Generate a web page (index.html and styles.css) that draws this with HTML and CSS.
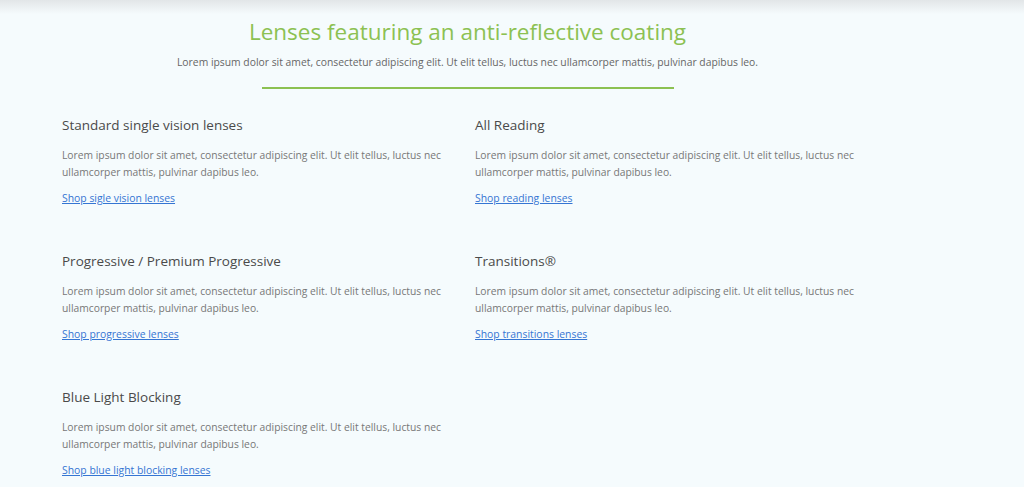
FILE: index.html
```html
<!DOCTYPE html>
<html lang="en">
<head>
  <meta charset="UTF-8">
  <meta name="viewport" content="width=device-width, initial-scale=1.0">
  <title>Anti-reflective lenses</title>
  <link rel="stylesheet" href="styles.css">
</head>
<body>

<div class="top-shadow"></div>

<div class="container">
  <section class="intro">
    <h1>Lenses featuring an anti-reflective coating</h1>
    <p class="lead">Lorem ipsum dolor sit amet, consectetur adipiscing elit. Ut elit tellus, luctus nec ullamcorper mattis, pulvinar dapibus leo.</p>
    <div class="divider"></div>
  </section>

  <section class="lens-grid">
    <div class="lens">
      <h3>Standard single vision lenses</h3>
      <p>Lorem ipsum dolor sit amet, consectetur adipiscing elit. Ut elit tellus, luctus nec ullamcorper mattis, pulvinar dapibus leo.</p>
      <a href="#">Shop sigle vision lenses</a>
    </div>
    <div class="lens">
      <h3>All Reading</h3>
      <p>Lorem ipsum dolor sit amet, consectetur adipiscing elit. Ut elit tellus, luctus nec ullamcorper mattis, pulvinar dapibus leo.</p>
      <a href="#">Shop reading lenses</a>
    </div>
    <div class="lens">
      <h3>Progressive / Premium Progressive</h3>
      <p>Lorem ipsum dolor sit amet, consectetur adipiscing elit. Ut elit tellus, luctus nec ullamcorper mattis, pulvinar dapibus leo.</p>
      <a href="#">Shop progressive lenses</a>
    </div>
    <div class="lens">
      <h3>Transitions®</h3>
      <p>Lorem ipsum dolor sit amet, consectetur adipiscing elit. Ut elit tellus, luctus nec ullamcorper mattis, pulvinar dapibus leo.</p>
      <a href="#">Shop transitions lenses</a>
    </div>
    <div class="lens">
      <h3>Blue Light Blocking</h3>
      <p>Lorem ipsum dolor sit amet, consectetur adipiscing elit. Ut elit tellus, luctus nec ullamcorper mattis, pulvinar dapibus leo.</p>
      <a href="#">Shop blue light blocking lenses</a>
    </div>
  </section>
</div>

</body>
</html>
```

FILE: styles.css
```css
body {
  font-family: "Open Sans", Arial, sans-serif;
  margin: 0;
  padding: 0;
  color: #777;
  background-color: #f5fbfd;
  overflow: hidden;
}
.top-shadow {
  position: absolute;
  top: 0;
  left: 0;
  right: 0;
  height: 14px;
  background: linear-gradient(to bottom, #e2e6e8, rgba(245, 251, 253, 0));
}
.container {
  width: 811px;
  margin-left: 62px;
}
.intro {
  text-align: center;
  padding-top: 14px;
}
.intro h1 {
  font-size: 22.5px;
  font-weight: 500;
  color: #8cc152;
  margin: 0;
  line-height: 36px;
}
.lead {
  font-size: 10.35px;
  line-height: 16px;
  margin: 4px 0 0;
  color: #666;
}
.divider {
  width: 412px;
  height: 2px;
  background-color: #8cc152;
  margin: 17px auto 0;
}
.lens-grid {
  display: grid;
  grid-template-columns: 413px 398px;
  margin-top: 26px;
  row-gap: 44px;
}
.lens h3 {
  font-size: 13.5px;
  font-weight: 500;
  color: #4a4a4a;
  margin: 0;
  line-height: 20px;
}
.lens p {
  font-size: 10.3px;
  line-height: 17px;
  margin: 12px 0 0;
  width: 395px;
}
.lens a {
  display: inline-block;
  font-size: 10.4px;
  line-height: 17px;
  margin-top: 9px;
  color: #3575d3;
}
```
